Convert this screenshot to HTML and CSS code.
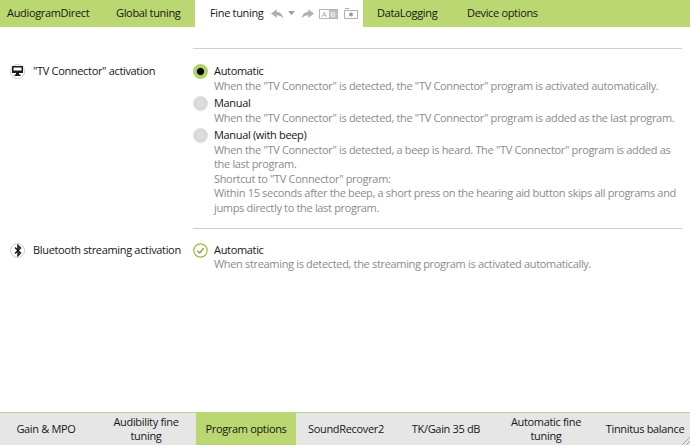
FILE: index.html
```html
<!DOCTYPE html>
<html lang="en">
<head>
<meta charset="utf-8">
<title>Fine tuning</title>
<link rel="stylesheet" href="styles.css">
</head>
<body>
<header class="topbar">
  <div class="tab tab-a">AudiogramDirect</div>
  <div class="tab tab-b">Global tuning</div>
  <div class="tab-active">
    <span class="active-label">Fine tuning</span>
    <span class="tools">
      <svg class="ic" width="13" height="10" viewBox="0 0 16 12"><path d="M7 0 0 5.500 7 11V7.500c3 0 6 1 8 4C14.500 6.500 11 3.500 7 3.300Z" fill="#b0b0b0"/></svg>
      <svg class="ic" width="7" height="5" viewBox="0 0 8 6"><path d="M0 0h8L4 5Z" fill="#9c9c9c"/></svg>
      <svg class="ic gap" width="13" height="10" viewBox="0 0 16 12"><path d="M9 0l7 5.500L9 11V7.500c-3 0-6 1-8 4C1.500 6.500 5 3.500 9 3.300Z" fill="#b0b0b0"/></svg>
      <span class="ab"><span class="ab-a">A</span><span class="ab-b">B</span></span>
      <svg class="ic cam" width="14" height="11" viewBox="0 0 14 11"><path d="M.5 2.500h13v8H.5zM1 .5h4" fill="none" stroke="#b0b0b0"/><circle cx="7" cy="6.500" r="2" fill="#999"/></svg>
    </span>
  </div>
  <div class="tab tab-c">DataLogging</div>
  <div class="tab tab-d">Device options</div>
</header>

<main class="content">
  <section class="group group-first">
    <div class="label">
      <span class="badge">
        <svg width="11" height="10" viewBox="0 0 11 10"><path d="M0 0h11v7H7v1.500h1.500V10h-6V8.500H4V7H0Z" fill="#1a1a1a"/><path d="M1.500 1.500h8v3h-8z" fill="#fff"/></svg>
      </span>
      <span>"TV Connector" activation</span>
    </div>
    <div class="options">
      <div class="option">
        <span class="radio radio-on"></span>
        <div>
          <div class="title">Automatic</div>
          <div class="desc">When the "TV Connector" is detected, the "TV Connector" program is activated automatically.</div>
        </div>
      </div>
      <div class="option">
        <span class="radio"></span>
        <div>
          <div class="title">Manual</div>
          <div class="desc">When the "TV Connector" is detected, the "TV Connector" program is added as the last program.</div>
        </div>
      </div>
      <div class="option">
        <span class="radio"></span>
        <div>
          <div class="title">Manual (with beep)</div>
          <div class="desc">When the "TV Connector" is detected, a beep is heard. The "TV Connector" program is added as<br>the last program.<br>Shortcut to "TV Connector" program:<br>Within 15 seconds after the beep, a short press on the hearing aid button skips all programs and<br>jumps directly to the last program.</div>
        </div>
      </div>
    </div>
  </section>
  <section class="group group-second">
    <div class="label">
      <span class="badge">
        <svg width="8" height="13" viewBox="0 0 8 13"><path d="M1 3.500 6.500 9 4 11.500v-10L6.500 4 1 9.500" fill="none" stroke="#1a1a1a" stroke-width="1.500"/></svg>
      </span>
      <span>Bluetooth streaming activation</span>
    </div>
    <div class="options">
      <div class="option">
        <svg class="check" width="15" height="15" viewBox="0 0 15 15"><circle cx="7.500" cy="7.500" r="6.700" fill="none" stroke="#a3b83f" stroke-width="1.200"/><path d="M4.200 7.600 6.700 10l4-4.800" fill="none" stroke="#8a9a32" stroke-width="1.300"/></svg>
        <div>
          <div class="title">Automatic</div>
          <div class="desc">When streaming is detected, the streaming program is activated automatically.</div>
        </div>
      </div>
    </div>
  </section>
</main>

<footer class="bottombar">
  <div class="btab b1">Gain &amp; MPO</div>
  <div class="btab">Audibility fine<br>tuning</div>
  <div class="btab btab-active">Program options</div>
  <div class="btab">SoundRecover2</div>
  <div class="btab">TK/Gain 35 dB</div>
  <div class="btab">Automatic fine<br>tuning</div>
  <div class="btab b7">Tinnitus balance</div>
  <svg class="grip" width="8" height="8" viewBox="0 0 8 8"><path d="M0 8 8 0M4 8l4-4" stroke="#a8a8a8" fill="none"/></svg>
</footer>
</body>
</html>
```
FILE: styles.css
```css
* { box-sizing: border-box; }
html, body { height: 100%; }
body {
  margin: 0;
  height: 445px;
  display: flex;
  flex-direction: column;
  overflow: hidden;
  background: #fff;
  color: #161616;
  font-family: "Open Sans", "Noto Sans", sans-serif;
  font-size: 11px;
  letter-spacing: -0.33px;
  line-height: 14.6px;
}
.topbar {
  display: flex;
  height: 27px;
  background: #bbd771;
  flex: none;
  align-items: stretch;
}
.tab { display: flex; align-items: center; white-space: nowrap; }
.tab-a { width: 116px; padding-left: 7px; }
.tab-b { width: 79px; }
.tab-c { width: 104px; padding-left: 14px; }
.tab-d { width: 100px; }
.tab-active {
  width: 168px;
  background: #fff;
  display: flex;
  align-items: center;
  padding-left: 15px;
  white-space: nowrap;
}
.active-label { width: 61px; flex: none; }
.tools { display: flex; align-items: center; gap: 4px; }
.ic { display: block; }
.gap { margin-left: 2px; }
.ab {
  display: flex;
  height: 10px;
  width: 19px;
  margin: 0 2px 0 1px;
  font-size: 8px;
  line-height: 8px;
  letter-spacing: 0;
  border: 1px solid #b5b5b5;
  color: #a8a8a8;
}
.ab-a { flex: 1; text-align: center; }
.ab-b { flex: 1; text-align: center; background: #c0c0c0; color: #fff; }
.content { flex: 1; padding: 21px 8px 0 10px; }
.group { display: grid; grid-template-columns: 183px 1fr; }
.group-first { margin-bottom: 12px; }
.label { display: flex; align-items: center; gap: 8px; height: 16px; margin-top: 15px; white-space: nowrap; }
.badge {
  width: 15px;
  height: 15px;
  border-radius: 50%;
  border: 1px solid #c8c8c8;
  display: flex;
  align-items: center;
  justify-content: center;
  flex: none;
}
.options { border-top: 1px solid #cfcfcf; padding-top: 15px; display: flex; flex-direction: column; gap: 2.8px; }
.group-second .options { padding-top: 14px; }
.option { display: grid; grid-template-columns: 14px 1fr; column-gap: 7px; white-space: nowrap; }
.desc { color: #8b8b8b; }
.radio {
  width: 15px;
  height: 15px;
  border-radius: 50%;
  background: radial-gradient(circle, #dedede 0 4px, #d2d2d2 4.600px 5.200px, #dedede 6px);
}
.radio-on {
  background: radial-gradient(circle, #000 0 3px, #b4d26a 4.200px);
}
.bottombar {
  position: relative;
  flex: none;
  height: 33px;
  display: flex;
  background: #e6e6e6;
  border-top: 1px solid #bfd584;
  line-height: 14px;
  text-align: center;
  white-space: nowrap;
}
.btab { display: flex; align-items: center; justify-content: center; width: 100px; flex: none; }
.btab-active { background: #bbd771; }
.b1 { width: 96px; padding-right: 4px; }
.b7 { width: 94px; padding-left: 4px; }
.grip { position: absolute; right: 0; bottom: 0; }
```
